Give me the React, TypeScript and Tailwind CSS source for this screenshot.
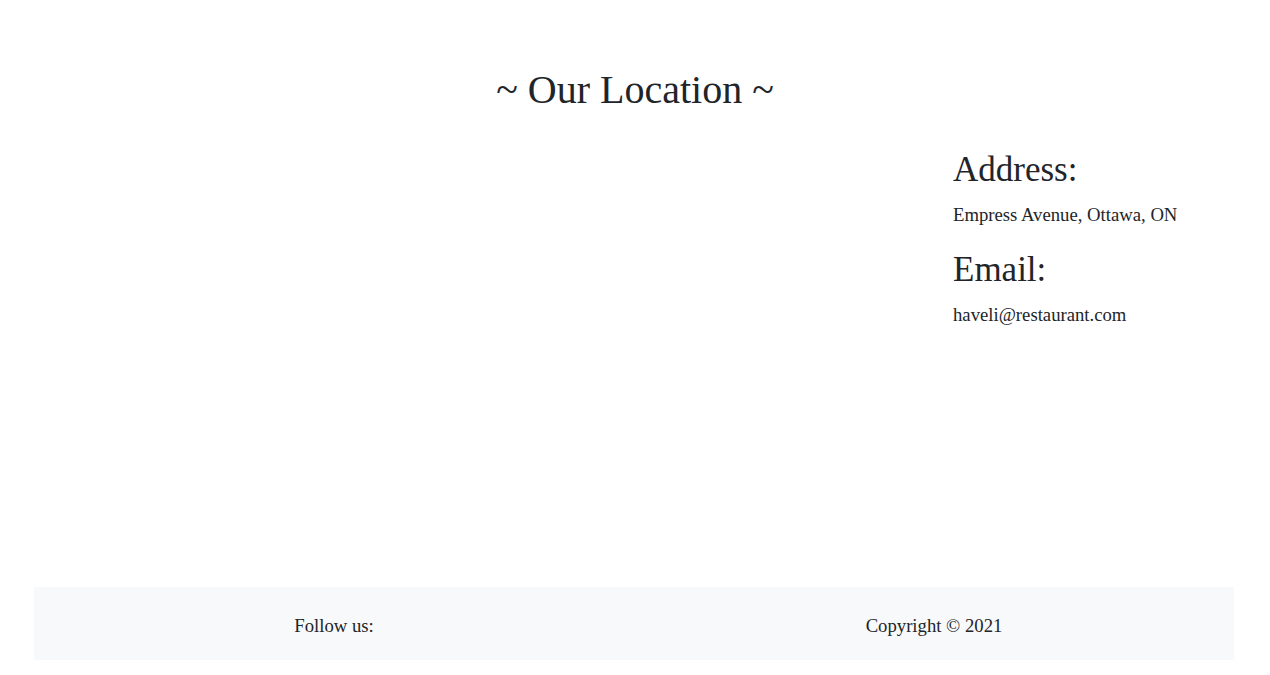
import React from "react";

const LocationSection: React.FC = () => {
    return (
        <section className="pt-[66px]">
            <h1 className="text-center text-[40px] leading-[48px] mb-[35px]">~ Our Location ~</h1>
            <div className="ml-[34px] mr-[36px] grid grid-cols-[1fr_281px]">
                {/* map area, empty in the screenshot */}
                <div className="h-[410px]" />
                <div>
                    <h2 className="text-[35px] leading-[42px]">Address:</h2>
                    <p className="mt-[10px] text-[18.7px] leading-[28px]">Empress Avenue, Ottawa, ON</p>
                    <h2 className="mt-[20px] text-[35px] leading-[42px]">Email:</h2>
                    <p className="mt-[10px] text-[18.7px] leading-[28px]">haveli@restaurant.com</p>
                </div>
            </div>
        </section>
    );
};

const Footer: React.FC = () => {
    return (
        <footer className="ml-[34px] mr-[36px] mt-[28px] mb-[16px] bg-[#f8f9fa] h-[73px] grid grid-cols-2 pt-[25px]">
            <p className="text-center text-[18.7px] leading-[28px]">Follow us:</p>
            <p className="text-center text-[18.7px] leading-[28px]">Copyright © 2021</p>
        </footer>
    );
};

const App: React.FC = () => {
    return (
        <div className="min-h-screen bg-white text-[#212529] font-['Liberation_Serif',serif]">
            <LocationSection />
            <Footer />
        </div>
    );
};

export default App;
